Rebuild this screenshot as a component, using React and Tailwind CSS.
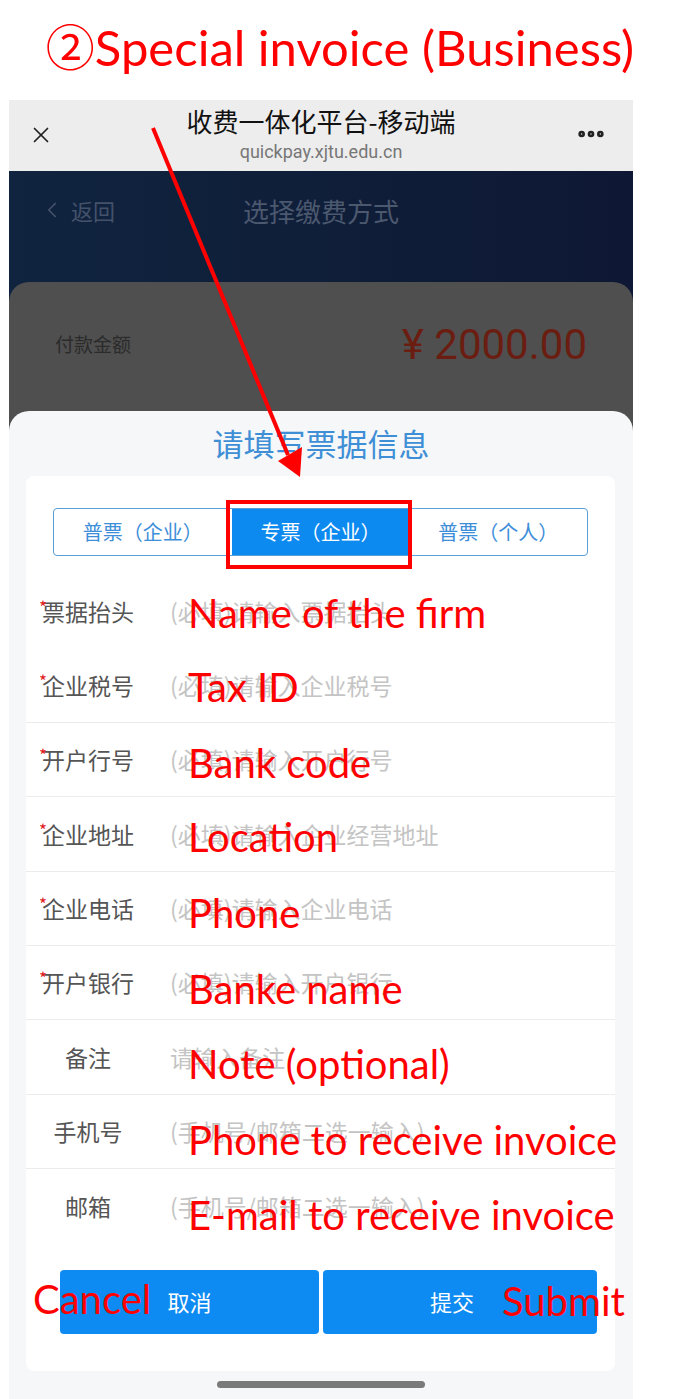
import { X, MoreHorizontal, ChevronLeft } from 'lucide-react';

const CJK = '"Noto Sans CJK SC", "Noto Sans", sans-serif';
const NOTE = 'Lato, "Noto Sans", sans-serif';

const ROWS = [
  { label: '票据抬头', ph: '(必填)请输入票据抬头', req: true, note: 'Name of the firm', dy: 3, line: false },
  { label: '企业税号', ph: '(必填)请输入企业税号', req: true, note: 'Tax ID', dy: 3, line: true },
  { label: '开户行号', ph: '(必填)请输入开户行号', req: true, note: 'Bank code', dy: 4, line: true },
  { label: '企业地址', ph: '(必填)请输入企业经营地址', req: true, note: 'Location', dy: 4, line: true },
  { label: '企业电话', ph: '(必填)请输入企业电话', req: true, note: 'Phone', dy: 5, line: true },
  { label: '开户银行', ph: '(必填)请输入开户银行', req: true, note: 'Banke name', dy: 7, line: true },
  { label: '备注', ph: '请输入备注', req: false, note: 'Note (optional)', dy: 8, line: true },
  { label: '手机号', ph: '(手机号/邮箱二选一输入)', req: false, note: 'Phone to receive invoice', dy: 9, line: true },
  { label: '邮箱', ph: '(手机号/邮箱二选一输入)', req: false, note: 'E-mail to receive invoice', dy: 10, line: false },
];

const TABS = ['普票（企业）', '专票（企业）', '普票（个人）'];

function FieldRow({ row }) {
  return (
    <div className={`relative flex items-center h-[74.4px] ${row.line ? 'border-b border-[#ececec]' : ''}`}>
      <div className="relative w-[96px] ml-[14px] text-center text-[23px] text-[#555]">
        {row.req && (
          <span className="absolute left-[-1px] top-[0px] text-[17px] text-[#e0201c]">*</span>
        )}
        {row.label}
      </div>
      <div className="ml-[34px] text-[23px] text-[#c4c4c4]">{row.ph}</div>
      <span
        className="absolute left-[162px] text-[40px] leading-none text-[#ff0000] whitespace-nowrap"
        style={{ fontFamily: NOTE, top: 16 + row.dy }}
      >
        {row.note}
      </span>
    </div>
  );
}

export default function App() {
  return (
    <div className="relative w-[680px] h-[1399px] bg-white overflow-hidden" style={{ fontFamily: CJK }}>
      {/* annotation title */}
      <div className="h-[100px] flex items-center justify-center pb-[8px]">
        <span className="text-[49px] text-[#ff0000] leading-none" style={{ fontFamily: NOTE }}>
          <span style={{ fontFamily: '"Noto Sans CJK SC", "DejaVu Sans", sans-serif' }}>②</span>Special invoice (Business)
        </span>
      </div>

      {/* phone screenshot */}
      <div className="ml-[9px] w-[624px] h-[1299px] flex flex-col">
        <div className="relative h-[71px] bg-[#ededed] flex flex-col items-center pt-[4px]">
          <X className="absolute left-[19px] top-[22px] w-[26px] h-[26px] text-[#222]" strokeWidth={1.6} />
          <div className="text-[26px] leading-[34px] text-[#111]">收费一体化平台-移动端</div>
          <div className="mt-[3px] text-[18px] leading-[22px] text-[#777]" style={{ fontFamily: 'Roboto, sans-serif' }}>
            quickpay.xjtu.edu.cn
          </div>
          <MoreHorizontal className="absolute right-[26px] top-[18px] w-[32px] h-[32px] text-[#222]" strokeWidth={3} />
        </div>

        <div className="flex-1 flex flex-col bg-gradient-to-r from-[#10243f] to-[#0e1834]">
          <div className="relative h-[111px] pt-[22px]">
            <div className="flex items-center h-[34px] pl-[30px] text-[#44516a]">
              <ChevronLeft className="w-[26px] h-[26px]" strokeWidth={1.6} />
              <span className="ml-[6px] text-[22px]">返回</span>
            </div>
            <div className="absolute left-0 right-0 top-[22px] h-[34px] flex items-center justify-center text-[26px] text-[#4b586e]">
              选择缴费方式
            </div>
          </div>

          <div className="flex-1 flex flex-col rounded-t-[20px] bg-[#4f4f4f]">
            <div className="h-[129px] flex items-start justify-between px-[46px] pt-[42px]">
              <span className="mt-[6px] text-[19px] text-[#2b2b2b]">付款金额</span>
              <span className="text-[42px] leading-none text-[#6a1d10]" style={{ fontFamily: 'Roboto, sans-serif' }}>
                ¥ 2000.00
              </span>
            </div>

            <div className="flex-1 flex flex-col rounded-t-[20px] bg-[#f6f7f9]">
              <div className="h-[65px] flex items-center justify-center text-[31px] text-[#3f8fd6]">
                请填写票据信息
              </div>
              <div className="mx-[17px] w-[589px] rounded-[8px] bg-white pt-[32px] pb-[37px]">
                <div className="relative flex mx-[27px] h-[48px] border border-[#5a9fd8] rounded-[4px] overflow-hidden">
                  {TABS.map((t, i) => (
                    <div
                      key={t}
                      className={`flex-1 flex items-center justify-center text-[20px] ${i === 1 ? 'bg-[#0d8af0] text-white' : 'text-[#3d8ed9]'}`}
                    >
                      {t}
                    </div>
                  ))}
                </div>
                <div className="mt-[18px]">
                  {ROWS.map((r) => (
                    <FieldRow key={r.label} row={r} />
                  ))}
                </div>
                <div className="relative flex gap-[4px] mt-[26px] ml-[34px]">
                  <button className="w-[259px] h-[64px] rounded-[4px] bg-[#0e8bf2] text-white text-[22px]">取消</button>
                  <button className="w-[274px] h-[64px] rounded-[4px] bg-[#0e8bf2] text-white text-[22px] pr-[16px]">提交</button>
                  <span
                    className="absolute left-[-27px] top-[9px] text-[40px] leading-none text-[#ff0000]"
                    style={{ fontFamily: NOTE }}
                  >
                    Cancel
                  </span>
                  <span
                    className="absolute left-[442px] top-[11px] text-[40px] leading-none text-[#ff0000]"
                    style={{ fontFamily: NOTE }}
                  >
                    Submit
                  </span>
                </div>
              </div>
              <div className="flex-1 flex items-center justify-center">
                <div className="w-[208px] h-[7px] rounded-full bg-[#7a7a7a]" />
              </div>
            </div>
          </div>
        </div>
      </div>

      {/* red highlight box and arrow */}
      <div className="absolute left-[226px] top-[500px] w-[186px] h-[69px] border-[4px] border-[#ff0000]" />
      <svg className="absolute left-0 top-0 pointer-events-none" width="680" height="1399">
        <line x1="153" y1="128" x2="288" y2="455" stroke="#ff0000" strokeWidth="4" />
        <polygon points="300,477 278,461 302,447" fill="#ff0000" />
      </svg>
    </div>
  );
}
